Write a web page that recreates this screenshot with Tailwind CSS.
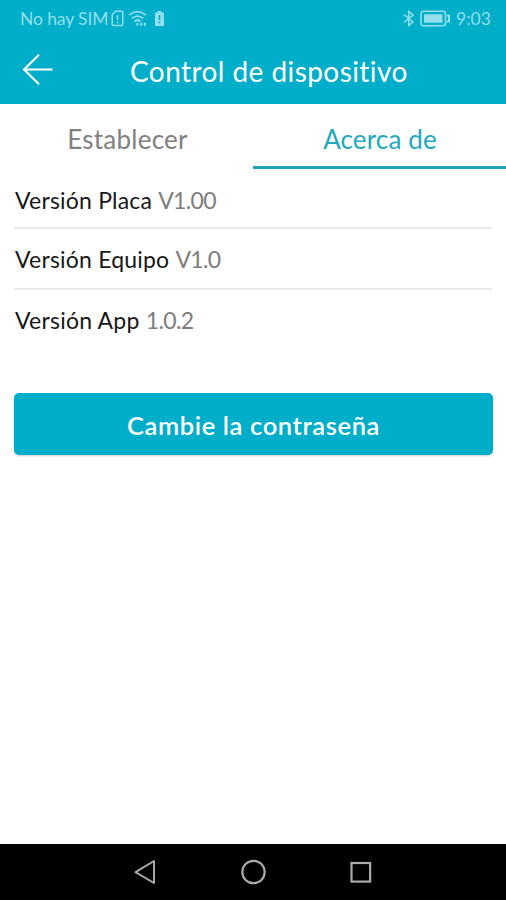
<!DOCTYPE html>
<html lang="es">
<head>
<meta charset="utf-8">
<title>Control de dispositivo</title>
<script src="https://cdn.jsdelivr.net/npm/@tailwindcss/browser@4"></script>
</head>
<body class="bg-white">
<div class="flex h-[900px] w-[506px] flex-col overflow-hidden bg-white font-[Lato,sans-serif] whitespace-nowrap">
  <header class="h-[104px] bg-[#00aeca] text-white">
    <div class="flex h-9 items-center pl-5 pr-4 text-[17.5px] text-[#93dfeb]">
      <span class="w-[88px] pt-0.5 tracking-[-0.1px]">No hay SIM</span>
      <svg class="ml-[3px] h-[17px] w-[13px]" viewBox="0 0 13 17" fill="none" stroke="currentColor" stroke-width="1.5"><path d="M4.5 1.2H10.5Q11.8 1.2 11.8 2.5V14.2Q11.8 15.5 10.5 15.5H2.5Q1.2 15.5 1.2 14.2V4.5Z"/><path d="M6.5 5V10M6.5 11.5V13.2"/></svg>
      <svg class="ml-[4px] h-[17px] w-[20px]" viewBox="0 0 20 17" fill="none" stroke="currentColor" stroke-width="1.7"><path d="M1 5.2Q9.5-1.8 18 5.2M3.7 8.4Q9.5 3.7 15.3 8.4M6.4 11.5Q9.5 9 12.6 11.5"/><path d="M9.5 13.1V15.6M13.2 12.8V15.8M16.8 12.8V15.8" stroke-width="2"/></svg>
      <svg class="ml-[6px] h-[17px] w-[11px]" viewBox="0 0 11 17"><path fill="currentColor" d="M3.5 1H7.5V2.5H9Q10 2.5 10 3.5V15Q10 16 9 16H2Q1 16 1 15V3.5Q1 2.5 2 2.5H3.5Z"/><path stroke="#00aeca" stroke-width="1.5" d="M5.5 5V10M5.5 11.5V13.2"/></svg>
      <span class="grow"></span>
      <svg class="h-[17px] w-[12px]" viewBox="0 0 12 17" fill="none" stroke="currentColor" stroke-width="1.5"><path d="M1 4.5L10 12L5.7 15.5V1.5L10 5L1 12.5"/></svg>
      <svg class="ml-[5px] h-[17px] w-[31px]" viewBox="0 0 31 17" fill="none" stroke="currentColor" stroke-width="1.6"><rect x="1" y="1.2" width="24.5" height="14.6" rx="2.5"/><rect x="4" y="4.3" width="18.5" height="8.4" rx=".5" fill="currentColor" stroke="none"/><path d="M27 5.5H29V11.5H27" stroke-width="2"/></svg>
      <span class="ml-[5px] w-[34px] pt-0.5">9:03</span>
    </div>
    <div class="flex h-[68px] items-center">
      <svg class="ml-[22px] h-[32px] w-[32px]" viewBox="0 0 32 32" fill="none" stroke="#fff" stroke-width="2.1"><path d="M17 .8L2 15.5L17 30.2M2 15.5H30.5"/></svg>
      <h1 class="ml-[76px] pt-0.5 text-[28px] tracking-[0.43px]">Control de dispositivo</h1>
    </div>
  </header>
  <nav class="grid h-[66px] grid-cols-2 items-start text-center text-[26px] leading-[70px]">
    <div class="h-[66px] pl-0.5 tracking-[0.25px] text-[#808080]">Establecer</div>
    <div class="h-[65px] border-b-3 border-[#1ba4b8] pl-px tracking-[0.15px] text-[#22a9bd]">Acerca de</div>
  </nav>
  <main class="flex grow flex-col px-[14px] text-[23px] leading-[60px] text-[#181818]">
    <div class="h-[59px] border-b-2 border-[#e9e9e9] pl-px"><span class="tracking-[0.2px]">Versión Placa </span><span class="tracking-[-0.7px] text-[#7d7d7d]">V1.00</span></div>
    <div class="h-[61px] border-b-2 border-[#e9e9e9] pl-px"><span class="tracking-[0.2px]">Versión Equipo </span><span class="tracking-[-0.7px] text-[#7d7d7d]">V1.0</span></div>
    <div class="h-[61px] pl-px"><span class="tracking-[0.23px]">Versión App </span><span class="tracking-[-0.6px] text-[#7d7d7d]">1.0.2</span></div>
    <button class="mt-[42px] mr-[-1px] h-[62px] rounded-[5px] bg-[#00aeca] pt-0.5 text-center text-[25.5px] tracking-[0.62px] font-semibold text-white shadow-[0_1px_2px_#0003]">Cambie la contraseña</button>
  </main>
  <footer class="flex h-14 items-center bg-black text-[#aaa]">
    <svg class="ml-[133px] h-[28px] w-[24px]" viewBox="0 0 24 28" fill="none" stroke="currentColor" stroke-width="2"><path d="M21 3V25L2.5 14.2Z" stroke-linejoin="round"/></svg>
    <svg class="ml-[83px] h-[28px] w-[28px]" viewBox="0 0 28 28" fill="none" stroke="currentColor" stroke-width="2.2"><circle cx="13.5" cy="14" r="11.2"/></svg>
    <svg class="ml-[80px] h-[28px] w-[24px]" viewBox="0 0 24 28" fill="none" stroke="currentColor" stroke-width="2.2"><rect x="3.5" y="5" width="18.6" height="18.6"/></svg>
  </footer>
</div>
</body>
</html>
